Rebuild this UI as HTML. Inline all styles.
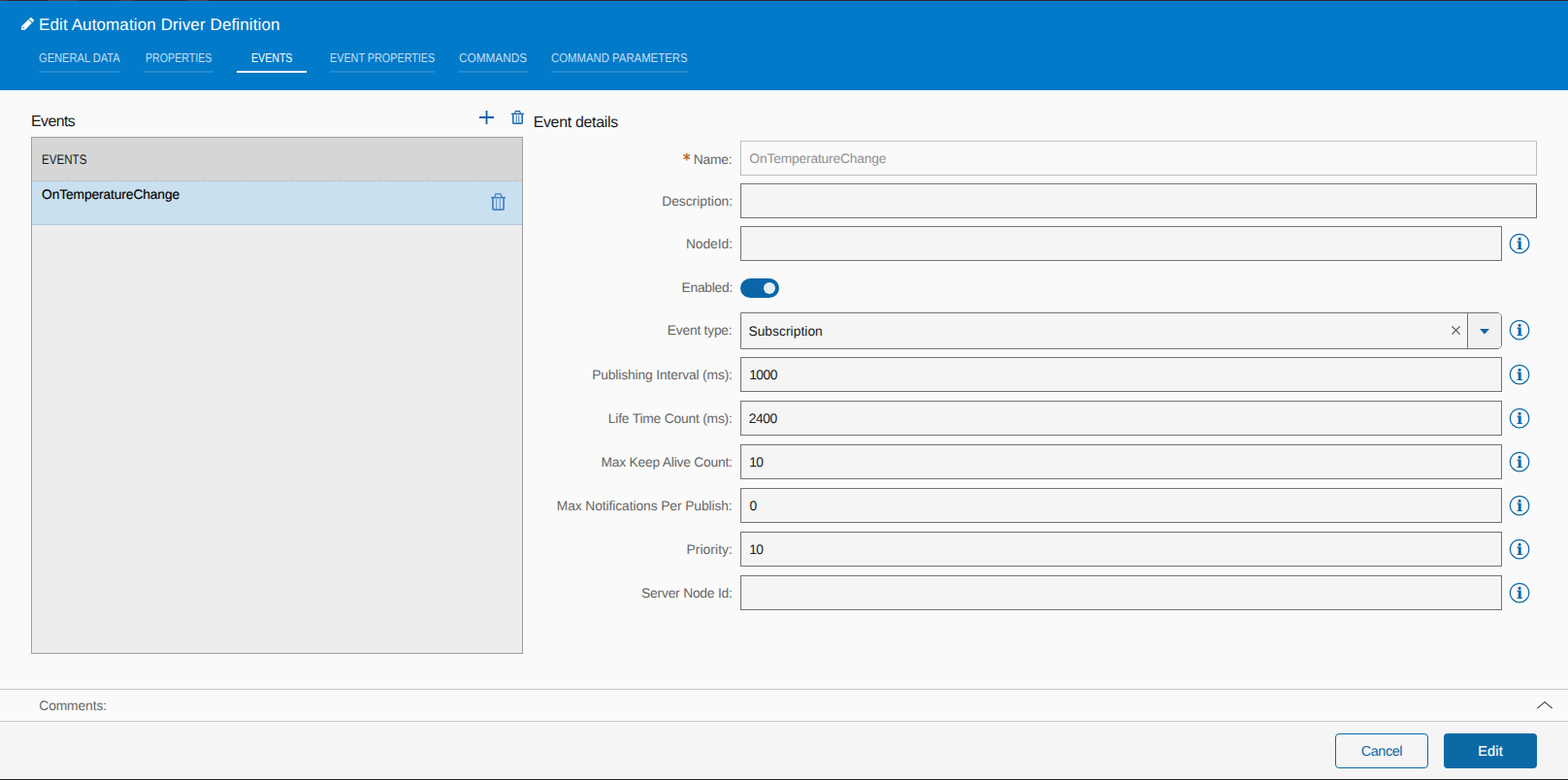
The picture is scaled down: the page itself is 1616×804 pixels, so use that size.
<!DOCTYPE html>
<html lang="en">
<head>
<meta charset="utf-8">
<title>Edit Automation Driver Definition</title>
<style>
*{box-sizing:border-box;margin:0;padding:0}
html,body{width:1616px;height:804px;overflow:hidden;background:#fafafa}
body{font-family:"Liberation Sans",sans-serif;font-size:14px;color:#1a1a1a;position:relative}
.abs{position:absolute;white-space:nowrap}
.t{display:block;font-weight:normal;line-height:1.2;text-rendering:geometricPrecision}
#topline{left:0;top:0;width:1616px;height:1px;background:#2b2b2b}
#header{left:0;top:1px;width:1616px;height:92px;background:#007ac9}
.tabline{height:2px;top:73px;background:#268bd0}
.tabline.active{background:#fff}
#list{left:32px;top:141px;width:507px;height:533px;background:#ededed;border:1px solid #a09e9f}
#listhead{left:0;top:0;width:505px;height:44px;background:#d6d6d6}
#listsep{left:0;top:44px;width:505px;height:1px;background:#c1c1c1 linear-gradient(90deg,#c1c1c1 0,#c1c1c1 5px,#d2d2d2 5px,#d2d2d2 6px,#c1c1c1 6px,#c1c1c1 7px) 0 0/7px 1px repeat-x}
#listrow{left:0;top:45px;width:505px;height:45px;background:#c9e0f0;border-bottom:1px solid #afc8de}
.inp{left:763px;height:36px;background:#f5f5f5;border:1px solid #737373}
.w1{width:821px}.w2{width:785px}
.info{left:1555px;width:22px;height:22px}
.hline{left:0;width:1616px;height:1px;background:#c9c9c9}
#footer{left:0;top:744px;width:1616px;height:59px;background:#f5f5f5}
#botline{left:0;top:803px;width:1616px;height:1px;background:#262626}
.btn{top:756px;width:96px;height:36px;border-radius:4px}
svg{display:block;overflow:visible}
</style>
</head>
<body>
<div class="abs" id="topline"></div><div class="abs" style="left:0;top:0;width:216px;height:1px;background:linear-gradient(90deg,#404040 0,#404040 7px,transparent 7px,transparent 50px,#444 50px,#444 81px,transparent 81px,transparent 123px,#404040 123px,#404040 138px,transparent 138px,transparent 193px,#444 193px,#444 215px,transparent 215px)"></div>
<div class="abs" id="header"></div>
<svg class="abs" style="left:22px;top:18px" width="13" height="13" viewBox="0 0 13 13"><path d="M0 13 L0.3 9.1 L7.3 2.1 L10.9 5.7 L3.9 12.7 Z M7.95 1.45 L9.2 0.2 Q9.8 -0.3 10.4 0.2 L12.8 2.6 Q13.3 3.2 12.8 3.8 L11.55 5.05 Z" fill="#fff"/><path d="M1.7 9.3L7.9 3.1" stroke="#007ac9" stroke-opacity="0.3" stroke-width="0.7" stroke-dasharray="1 0.6" fill="none"/><circle cx="2.4" cy="10.4" r="0.75" fill="#2a6fc0"/></svg>

<div class="abs tabline" style="left:40px;width:84px"></div>
<div class="abs tabline" style="left:148px;width:72px"></div>
<div class="abs tabline active" style="left:244px;width:72px"></div>
<div class="abs tabline" style="left:340px;width:108px"></div>
<div class="abs tabline" style="left:472px;width:72px"></div>
<div class="abs tabline" style="left:568px;width:141px"></div>

<!-- toolbar icons -->
<svg class="abs" style="left:494px;top:114px" width="15" height="14" viewBox="0 0 15 14"><path d="M0 7H15M7.5 0V14" stroke="#0b5fa5" stroke-width="1.8" fill="none"/></svg>
<svg class="abs" style="left:527px;top:114px" width="13" height="14" viewBox="0 0 13 14"><g fill="none" stroke="#1468b3"><path d="M0 3.3H13" stroke-width="1.3"/><path d="M3.6 3 L4.4 0.6 H8.6 L9.4 3" stroke-width="1.1"/><path d="M1.8 3.5 V12.4 Q1.8 13.3 2.7 13.3 H10.3 Q11.2 13.3 11.2 12.4 V3.5" stroke-width="1.5"/><path d="M5.2 4.5V12.5M7.8 4.5V12.5" stroke-width="0.9"/></g></svg>

<div class="abs" id="list">
  <div class="abs" id="listhead"></div>
  <div class="abs" id="listsep"></div>
  <div class="abs" id="listrow"></div>
</div>
<svg class="abs" style="left:506px;top:199px" width="15" height="18" viewBox="0 0 15 18"><g fill="none" stroke="#4580c4"><path d="M0 4.7H15" stroke-width="1.6"/><path d="M3.9 4.3 L5 0.8 H10 L11.1 4.3" stroke-width="1.3"/><path d="M1.9 5 V16 Q1.9 17.2 3.1 17.2 H11.9 Q13.1 17.2 13.1 16 V5" stroke-width="1.7"/><path d="M5.7 6V16M9.3 6V16" stroke-width="0.8"/></g></svg>

<div class="abs" style="left:704px;top:155px;font-family:'DejaVu Sans',sans-serif;font-size:15px;line-height:20px;color:#b0631d;-webkit-text-stroke:0.35px #b0631d" id="ast">*</div>
<div class="abs inp w1" style="top:145px;background:#fafafa;border-color:#bdbdbd"></div>
<div class="abs inp w1" style="top:189px"></div>
<div class="abs inp w2" style="top:233px"></div>
<div class="abs" style="left:763px;top:287px;width:40px;height:20px;border-radius:10px;background:#0a66a8"><div class="abs" style="left:24px;top:4px;width:12px;height:12px;border-radius:6px;background:#e4eff6"></div></div>
<div class="abs inp w2" style="top:322px;height:38px;border-radius:0 5px 5px 0"><div class="abs" style="left:748px;top:0;width:1px;height:36px;background:#737373"></div><div class="abs" style="left:749px;top:0;width:34px;height:36px;background:#f1f1f1;border-radius:0 4px 4px 0"></div></div>
<svg class="abs" style="left:1496px;top:336px" width="9" height="9" viewBox="0 0 9 9"><path d="M0.4 0.4L8.6 8.6M8.6 0.4L0.4 8.6" stroke="#555" stroke-width="1.3" fill="none"/></svg>
<svg class="abs" style="left:1525px;top:339px" width="10" height="6" viewBox="0 0 10 6"><path d="M0 0H10L5 5.4Z" fill="#0b67a8"/></svg>
<div class="abs inp w2" style="top:368px"></div>
<div class="abs inp w2" style="top:413px"></div>
<div class="abs inp w2" style="top:458px"></div>
<div class="abs inp w2" style="top:503px"></div>
<div class="abs inp w2" style="top:548px"></div>
<div class="abs inp w2" style="top:593px"></div>

<svg class="abs info" style="top:240px" width="22" height="22" viewBox="0 0 22 22"><circle cx="11.05" cy="11.05" r="9.8" fill="none" stroke="#0b67a8" stroke-width="1.25"/><text x="10.95" y="17" text-anchor="middle" text-rendering="geometricPrecision" font-family="DejaVu Serif, serif" font-weight="bold" font-size="16" fill="#0b67a8" stroke="#0b67a8" stroke-width="0.15">i</text></svg>
<svg class="abs info" style="top:329px" width="22" height="22" viewBox="0 0 22 22"><circle cx="11.05" cy="11.05" r="9.8" fill="none" stroke="#0b67a8" stroke-width="1.25"/><text x="10.95" y="17" text-anchor="middle" text-rendering="geometricPrecision" font-family="DejaVu Serif, serif" font-weight="bold" font-size="16" fill="#0b67a8" stroke="#0b67a8" stroke-width="0.15">i</text></svg>
<svg class="abs info" style="top:375px" width="22" height="22" viewBox="0 0 22 22"><circle cx="11.05" cy="11.05" r="9.8" fill="none" stroke="#0b67a8" stroke-width="1.25"/><text x="10.95" y="17" text-anchor="middle" text-rendering="geometricPrecision" font-family="DejaVu Serif, serif" font-weight="bold" font-size="16" fill="#0b67a8" stroke="#0b67a8" stroke-width="0.15">i</text></svg>
<svg class="abs info" style="top:420px" width="22" height="22" viewBox="0 0 22 22"><circle cx="11.05" cy="11.05" r="9.8" fill="none" stroke="#0b67a8" stroke-width="1.25"/><text x="10.95" y="17" text-anchor="middle" text-rendering="geometricPrecision" font-family="DejaVu Serif, serif" font-weight="bold" font-size="16" fill="#0b67a8" stroke="#0b67a8" stroke-width="0.15">i</text></svg>
<svg class="abs info" style="top:465px" width="22" height="22" viewBox="0 0 22 22"><circle cx="11.05" cy="11.05" r="9.8" fill="none" stroke="#0b67a8" stroke-width="1.25"/><text x="10.95" y="17" text-anchor="middle" text-rendering="geometricPrecision" font-family="DejaVu Serif, serif" font-weight="bold" font-size="16" fill="#0b67a8" stroke="#0b67a8" stroke-width="0.15">i</text></svg>
<svg class="abs info" style="top:510px" width="22" height="22" viewBox="0 0 22 22"><circle cx="11.05" cy="11.05" r="9.8" fill="none" stroke="#0b67a8" stroke-width="1.25"/><text x="10.95" y="17" text-anchor="middle" text-rendering="geometricPrecision" font-family="DejaVu Serif, serif" font-weight="bold" font-size="16" fill="#0b67a8" stroke="#0b67a8" stroke-width="0.15">i</text></svg>
<svg class="abs info" style="top:555px" width="22" height="22" viewBox="0 0 22 22"><circle cx="11.05" cy="11.05" r="9.8" fill="none" stroke="#0b67a8" stroke-width="1.25"/><text x="10.95" y="17" text-anchor="middle" text-rendering="geometricPrecision" font-family="DejaVu Serif, serif" font-weight="bold" font-size="16" fill="#0b67a8" stroke="#0b67a8" stroke-width="0.15">i</text></svg>
<svg class="abs info" style="top:600px" width="22" height="22" viewBox="0 0 22 22"><circle cx="11.05" cy="11.05" r="9.8" fill="none" stroke="#0b67a8" stroke-width="1.25"/><text x="10.95" y="17" text-anchor="middle" text-rendering="geometricPrecision" font-family="DejaVu Serif, serif" font-weight="bold" font-size="16" fill="#0b67a8" stroke="#0b67a8" stroke-width="0.15">i</text></svg>


<div class="abs hline" style="top:710px"></div>
<svg class="abs" style="left:1584px;top:723px" width="16" height="8" viewBox="0 0 16 8"><path d="M0.3 7.2L8 0.7L15.7 7.2" stroke="#3a3a3a" stroke-width="1.1" fill="none"/></svg>
<div class="abs hline" style="top:743px"></div>
<div class="abs" id="footer"></div>
<div class="abs btn" style="left:1376px;background:#f5f5f5;border:1px solid #0b69a6"></div>
<div class="abs btn" style="left:1488px;background:#0b69a6"></div>
<div class="abs" id="botline"></div>
<h1 class="abs t" id="title" style="left:40.0px;top:16px;font-size:17px;color:#fff;letter-spacing:0.116px">Edit Automation Driver Definition</h1>
<span class="abs t" id="tab1" style="left:40.0px;top:52px;font-size:13px;color:#c6dff3;transform:scaleX(0.8544);transform-origin:0 0">GENERAL DATA</span>
<span class="abs t" id="tab2" style="left:150.0px;top:52px;font-size:13px;color:#c6dff3;transform:scaleX(0.8189);transform-origin:0 0">PROPERTIES</span>
<span class="abs t" id="tab3" style="left:258.5px;top:52px;font-size:13px;color:#fff;transform:scaleX(0.8160);transform-origin:0 0">EVENTS</span>
<span class="abs t" id="tab4" style="left:340.0px;top:52px;font-size:13px;color:#c6dff3;transform:scaleX(0.8312);transform-origin:0 0">EVENT PROPERTIES</span>
<span class="abs t" id="tab5" style="left:472.5px;top:52px;font-size:13px;color:#c6dff3;transform:scaleX(0.9074);transform-origin:0 0">COMMANDS</span>
<span class="abs t" id="tab6" style="left:568.0px;top:52px;font-size:13px;color:#c6dff3;transform:scaleX(0.8735);transform-origin:0 0">COMMAND PARAMETERS</span>
<h2 class="abs t" id="hEvents" style="left:32.05px;top:116px;font-size:15.9px;color:#1a1a1a;letter-spacing:-0.568px">Events</h2>
<h2 class="abs t" id="hDetails" style="left:549.64px;top:117px;font-size:15.9px;color:#1a1a1a;letter-spacing:-0.282px">Event details</h2>
<span class="abs t" id="lhead" style="left:42.5px;top:157px;font-size:13.8px;color:#1a1a1a;transform:scaleX(0.8412);transform-origin:0 0">EVENTS</span>
<span class="abs t" id="lrow" style="left:43.03px;top:193px;font-size:13.8px;color:#000;letter-spacing:-0.113px;-webkit-text-stroke:0.15px #000">OnTemperatureChange</span>
<label class="abs t" id="lName" style="left:714.81px;top:157px;font-size:13.8px;color:#666;letter-spacing:-0.194px">Name:</label>
<label class="abs t" id="lDesc" style="left:682.17px;top:200px;font-size:13.8px;color:#666;letter-spacing:0.008px">Description:</label>
<label class="abs t" id="lNode" style="left:706.91px;top:244px;font-size:13.8px;color:#666;letter-spacing:-0.035px">NodeId:</label>
<label class="abs t" id="lEnabled" style="left:702.56px;top:289px;font-size:13.8px;color:#666;letter-spacing:-0.254px">Enabled:</label>
<label class="abs t" id="lType" style="left:687.81px;top:333px;font-size:13.8px;color:#666;letter-spacing:-0.216px">Event type:</label>
<label class="abs t" id="lPub" style="left:610.17px;top:379px;font-size:13.8px;color:#666;letter-spacing:-0.133px">Publishing Interval (ms):</label>
<label class="abs t" id="lLife" style="left:626.81px;top:424px;font-size:13.8px;color:#666;letter-spacing:-0.191px">Life Time Count (ms):</label>
<label class="abs t" id="lKeep" style="left:619.56px;top:469px;font-size:13.8px;color:#666;letter-spacing:-0.210px">Max Keep Alive Count:</label>
<label class="abs t" id="lNotif" style="left:573.81px;top:514px;font-size:13.8px;color:#666;letter-spacing:-0.082px">Max Notifications Per Publish:</label>
<label class="abs t" id="lPrio" style="left:707.56px;top:559px;font-size:13.8px;color:#666;letter-spacing:0.070px">Priority:</label>
<label class="abs t" id="lServer" style="left:661.09px;top:604px;font-size:13.8px;color:#666;letter-spacing:-0.203px">Server Node Id:</label>
<span class="abs t" id="vName" style="left:772.33px;top:156px;font-size:13.8px;color:#909090;letter-spacing:-0.165px">OnTemperatureChange</span>
<span class="abs t" id="vType" style="left:771.4px;top:334px;font-size:13.8px;color:#1a1a1a;letter-spacing:0.042px">Subscription</span>
<span class="abs t" id="vPub" style="left:772.13px;top:379px;font-size:13.8px;color:#1a1a1a;letter-spacing:-0.450px">1000</span>
<span class="abs t" id="vLife" style="left:771.81px;top:424px;font-size:13.8px;color:#1a1a1a;letter-spacing:-0.450px">2400</span>
<span class="abs t" id="vKeep" style="left:772.13px;top:469px;font-size:13.8px;color:#1a1a1a;letter-spacing:-0.450px">10</span>
<span class="abs t" id="vNotif" style="left:772.43px;top:514px;font-size:13.8px;color:#1a1a1a;letter-spacing:-0.450px">0</span>
<span class="abs t" id="vPrio" style="left:772.13px;top:559px;font-size:13.8px;color:#1a1a1a;letter-spacing:-0.450px">10</span>
<label class="abs t" id="comments" style="left:40.29px;top:720px;font-size:13.8px;color:#666;letter-spacing:-0.101px">Comments:</label>
<span class="abs t" id="cancel" style="left:1402.67px;top:767px;font-size:14.4px;color:#0b69a6;letter-spacing:-0.377px">Cancel</span>
<span class="abs t" id="edit" style="left:1523.31px;top:767px;font-size:14.4px;color:#fff;letter-spacing:0.201px;-webkit-text-stroke:0.2px #fff">Edit</span>
</body>
</html>
